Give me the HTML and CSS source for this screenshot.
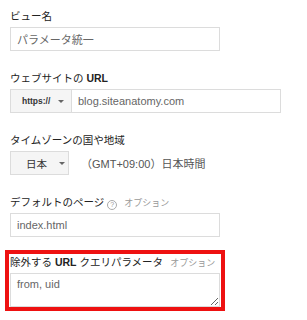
FILE: index.html
```html
<!DOCTYPE html>
<html lang="ja">
<head>
  <meta charset="UTF-8" />
  <meta name="viewport" content="width=device-width, initial-scale=1" />
  <title>ビュー設定</title>
  <link rel="stylesheet" href="styles.css">
</head>
<body>
  <div class="settings">
    <div class="field">
      <label class="field-label">ビュー名</label>
      <input class="text-input short" type="text" value="パラメータ統一" />
    </div>

    <div class="field">
      <label class="field-label">ウェブサイトの <b>URL</b></label>
      <div class="url-row">
        <button class="drop-btn proto">https:// <span class="caret"></span></button>
        <input class="text-input url" type="text" value="blog.siteanatomy.com" />
      </div>
    </div>

    <div class="field">
      <label class="field-label">タイムゾーンの国や地域</label>
      <div class="tz-row">
        <button class="drop-btn country">日本 <span class="caret"></span></button>
        <span class="tz-text">（GMT+09:00）日本時間</span>
      </div>
    </div>

    <div class="field">
      <label class="field-label">デフォルトのページ<span class="help">?</span><span class="optional">オプション</span></label>
      <input class="text-input short" type="text" value="index.html" />
    </div>

    <div class="field highlight">
      <label class="field-label">除外する <b>URL</b> クエリパラメータ<span class="optional">オプション</span></label>
      <textarea class="text-area">from, uid</textarea>
    </div>
  </div>
</body>
</html>
```

FILE: styles.css
```css
* {
  margin: 0;
  padding: 0;
  box-sizing: border-box;
}
body {
  font-family: 'Liberation Sans', 'Noto Sans CJK JP', sans-serif;
  background: #fff;
  color: #222;
}
.settings {
  padding: 8px 0 0 10px;
}
.field {
  margin-bottom: 19px;
}
.field-label {
  display: block;
  height: 16px;
  line-height: 16px;
  margin-bottom: 3px;
  font-size: 10.5px;
  white-space: nowrap;
  color: #222;
}
.text-input {
  display: block;
  height: 24px;
  padding: 0 6px;
  border: 1px solid #dcdcdc;
  font-family: inherit;
  font-size: 11px;
  color: #666;
  background: #fff;
  outline: none;
}
.short {
  width: 210px;
}
.url-row,
.tz-row {
  display: flex;
  align-items: center;
}
.url {
  width: 209px;
  border-left: none;
}
.drop-btn {
  display: flex;
  align-items: center;
  height: 24px;
  border: 1px solid #dcdcdc;
  background: #f5f5f5;
  font-family: inherit;
  color: #333;
}
.proto {
  width: 62px;
  padding-left: 11px;
  font-size: 8.5px;
  font-weight: bold;
}
.country {
  width: 59px;
  padding-left: 15px;
  font-size: 10.5px;
}
.caret {
  width: 0;
  height: 0;
  border-left: 3px solid transparent;
  border-right: 3px solid transparent;
  border-top: 3px solid #666;
}
.proto .caret {
  margin-left: 8px;
}
.country .caret {
  margin-left: 12px;
}
.tz-text {
  margin-left: 12px;
  font-size: 11px;
  color: #555;
}
.help {
  display: inline-block;
  width: 10px;
  height: 10px;
  margin-left: 3px;
  border: 1px solid #aaa;
  border-radius: 50%;
  font-size: 7px;
  line-height: 8px;
  text-align: center;
  vertical-align: -1px;
  color: #999;
}
.optional {
  margin-left: 7px;
  font-size: 9px;
  color: #999;
}
.highlight {
  width: 220px;
  margin-left: -5px;
  margin-top: -6px;
  padding: 0 1px 0 1px;
  border: 4px solid #ee1111;
}
.text-area {
  display: block;
  width: 210px;
  height: 34px;
  padding: 4px 6px;
  border: 1px solid #dcdcdc;
  font-family: inherit;
  font-size: 11px;
  color: #666;
  resize: vertical;
  outline: none;
}
```
